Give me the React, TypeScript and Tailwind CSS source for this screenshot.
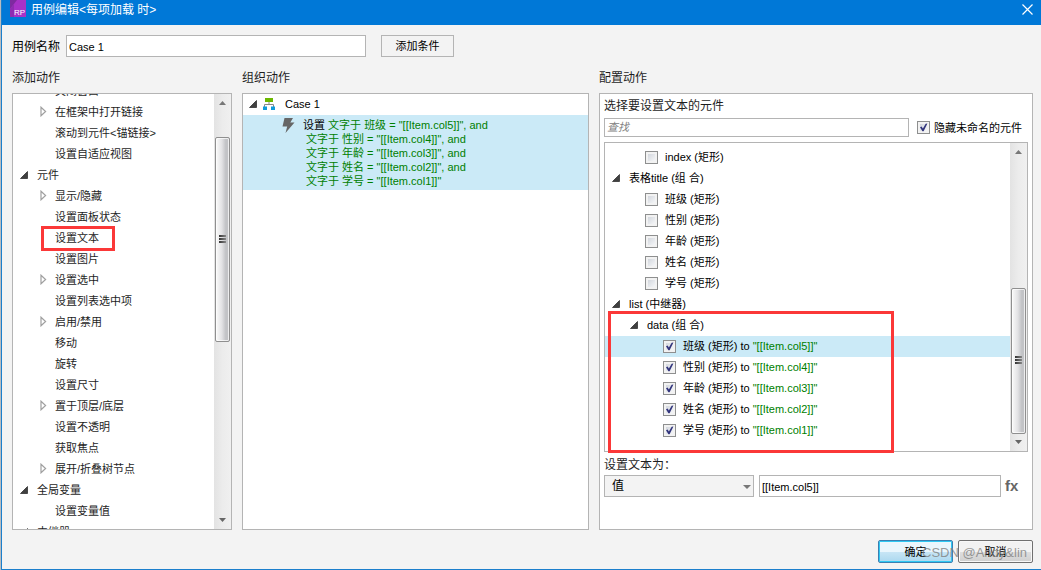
import { useState } from "react";

interface TreeRow {
  label: string;
  level: number;
  icon?: "open" | "closed";
  marked?: boolean;
}

interface Widget {
  label: string;
  level: number;
  kind: "group" | "leaf";
  value?: string;
  active?: boolean;
}

const actions: TreeRow[] = [
  { label: "关闭窗口", level: 1 },
  { label: "在框架中打开链接", level: 1, icon: "closed" },
  { label: "滚动到元件<锚链接>", level: 1 },
  { label: "设置自适应视图", level: 1 },
  { label: "元件", level: 0, icon: "open" },
  { label: "显示/隐藏", level: 1, icon: "closed" },
  { label: "设置面板状态", level: 1 },
  { label: "设置文本", level: 1, marked: true },
  { label: "设置图片", level: 1 },
  { label: "设置选中", level: 1, icon: "closed" },
  { label: "设置列表选中项", level: 1 },
  { label: "启用/禁用", level: 1, icon: "closed" },
  { label: "移动", level: 1 },
  { label: "旋转", level: 1 },
  { label: "设置尺寸", level: 1 },
  { label: "置于顶层/底层", level: 1, icon: "closed" },
  { label: "设置不透明", level: 1 },
  { label: "获取焦点", level: 1 },
  { label: "展开/折叠树节点", level: 1, icon: "closed" },
  { label: "全局变量", level: 0, icon: "open" },
  { label: "设置变量值", level: 1 },
  { label: "中继器", level: 0, icon: "open" },
];

const widgets: Widget[] = [
  { label: "index (矩形)", level: 1, kind: "leaf" },
  { label: "表格title (组 合)", level: 0, kind: "group" },
  { label: "班级 (矩形)", level: 1, kind: "leaf" },
  { label: "性别 (矩形)", level: 1, kind: "leaf" },
  { label: "年龄 (矩形)", level: 1, kind: "leaf" },
  { label: "姓名 (矩形)", level: 1, kind: "leaf" },
  { label: "学号 (矩形)", level: 1, kind: "leaf" },
  { label: "list (中继器)", level: 0, kind: "group" },
  { label: "data (组 合)", level: 1, kind: "group" },
  { label: "班级 (矩形)", level: 2, kind: "leaf", value: "[[Item.col5]]", active: true },
  { label: "性别 (矩形)", level: 2, kind: "leaf", value: "[[Item.col4]]" },
  { label: "年龄 (矩形)", level: 2, kind: "leaf", value: "[[Item.col3]]" },
  { label: "姓名 (矩形)", level: 2, kind: "leaf", value: "[[Item.col2]]" },
  { label: "学号 (矩形)", level: 2, kind: "leaf", value: "[[Item.col1]]" },
];

const settings = [
  { name: "班级", value: "[[Item.col5]]" },
  { name: "性别", value: "[[Item.col4]]" },
  { name: "年龄", value: "[[Item.col3]]" },
  { name: "姓名", value: "[[Item.col2]]" },
  { name: "学号", value: "[[Item.col1]]" },
];

function OpenArrow() {
  return (
    <svg className="h-2 w-2 shrink-0" viewBox="0 0 8 8" aria-hidden="true">
      <path d="M7.5 0.5V7.5H0.5Z" fill="#404040" stroke="#222" strokeWidth="0.7" />
    </svg>
  );
}

function ClosedArrow() {
  return (
    <svg className="h-[11px] w-[7px] shrink-0" viewBox="0 0 7 11" aria-hidden="true">
      <path d="M1 1.2L5.6 5.5L1 9.8Z" fill="#fff" stroke="#a0a0a0" strokeWidth="1.2" />
    </svg>
  );
}

function Checkbox({ id, defaultChecked }: { id: string; defaultChecked?: boolean }) {
  return (
    <span className="relative block h-[13px] w-[13px] shrink-0">
      <input id={id} type="checkbox" defaultChecked={defaultChecked} className="peer block h-[13px] w-[13px] appearance-none border border-[#8e8f8f] bg-linear-to-br from-[#c9ced6] to-white ring-2 ring-inset ring-[#f2f2f2]" />
      <svg className="pointer-events-none absolute inset-0 hidden peer-checked:block" viewBox="0 0 13 13" aria-hidden="true">
        <path d="M3 6.2L4.6 5.6L5.9 7.6L8.7 2.8L10.4 2.6L6.6 10.2H5.4Z" fill="#31347c" />
      </svg>
    </span>
  );
}

function Scrollbar({ thumb }: { thumb: string }) {
  return (
    <div className="flex w-[17px] shrink-0 flex-col items-center bg-linear-to-r from-[#e3e3e3] via-[#ececec] to-[#f0f0f0]">
      <div className="flex h-[17px] items-center">
        <svg className="h-1 w-[7px]" viewBox="0 0 7 4" aria-hidden="true"><path d="M0 4L3.5 0L7 4Z" fill="#777" /></svg>
      </div>
      <div className="flex w-full flex-1 flex-col px-px">
        <div className={`flex flex-col items-center justify-center gap-px rounded-xs border border-[#8f8f8f] bg-linear-to-r from-[#f5f5f5] from-10% via-[#e2e2e4] via-45% to-[#c2c3c6] to-75% pb-0.5 ring-1 ring-inset ring-white/70 ${thumb}`}>
          <span className="h-0.5 w-[7px] bg-linear-to-r from-[#333] to-[#888]"></span>
          <span className="h-0.5 w-[7px] bg-linear-to-r from-[#333] to-[#888]"></span>
          <span className="h-0.5 w-[7px] bg-linear-to-r from-[#333] to-[#888]"></span>
        </div>
      </div>
      <div className="flex h-[17px] items-center pb-0.5">
        <svg className="h-1 w-[7px]" viewBox="0 0 7 4" aria-hidden="true"><path d="M0 0H7L3.5 4Z" fill="#666" /></svg>
      </div>
    </div>
  );
}

function ActionTree() {
  return (
    <div className="flex h-[437px] border border-[#b4b4b4] bg-white text-[#1e1e1e]">
      <div className="min-w-0 flex-1 overflow-hidden">
        <ul className="-mt-[14px]">
          {actions.map((row) => (
            <li key={row.label} className="relative">
              <button className={`flex h-[21px] w-full items-center whitespace-nowrap text-left ${row.level === 0 ? "pl-[7px]" : "pl-[27px]"}`}>
                <span className={`flex shrink-0 ${row.level === 0 ? "w-[17px]" : "w-[15px]"}`}>
                  {row.icon === "open" && <OpenArrow />}
                  {row.icon === "closed" && <ClosedArrow />}
                </span>
                {row.label}
              </button>
              {row.marked && <span className="pointer-events-none absolute -top-px left-7 h-[25px] w-[74px] border-3 border-[#fb3838]"></span>}
            </li>
          ))}
        </ul>
      </div>
      <Scrollbar thumb="mt-[26px] h-[205px]" />
    </div>
  );
}

function CasePanel() {
  return (
    <div className="h-[437px] overflow-hidden border border-[#b4b4b4] bg-white">
      <button className="flex h-[21px] w-full items-center pb-px pl-1.5 text-left">
        <OpenArrow />
        <svg className="ml-1.5 h-3 w-3" viewBox="0 0 12 12" aria-hidden="true">
          <path d="M2 0H10V4H2Z" fill="#6cb800" />
          <path d="M6 4V6.5M1.5 9V6.5H10.5V9" fill="none" stroke="#888" />
          <path d="M0 8.5H4V12H0ZM8 8.5H12V12H8Z" fill="#0f9bdb" />
        </svg>
        <span className="ml-2.5">Case 1</span>
      </button>
      <div className="flex bg-[#cbeaf7] pt-[3px] pb-0.5 pl-[39px]">
        <svg className="h-[15px] w-[13px] shrink-0" viewBox="0 0 13 15" aria-hidden="true">
          <path d="M2.5 0H11L8.3 4.5H12.5L3.5 15L5.2 8.5H0.5Z" fill="#666" />
        </svg>
        <div className="ml-2 leading-[14px] whitespace-nowrap text-[#008000]">
          {settings.map((s, i) => (
            <p key={s.name} className={i === 0 ? "" : "pl-[3px]"}>
              {i === 0 && <span className="text-black">设置 </span>}
              文字于 {s.name} = "{s.value}"{i < settings.length - 1 && ", and"}
            </p>
          ))}
        </div>
      </div>
    </div>
  );
}

function WidgetTree() {
  return (
    <div className="relative mt-[5px] flex h-[310px] border border-[#b4b4b4] bg-white">
      <ul className="min-w-0 flex-1 overflow-hidden pt-1">
        {widgets.map((w, i) => {
          const id = `widget-${i}`;
          if (w.kind === "group") {
            return (
              <li key={id}>
                <button className={`flex h-[21px] w-full items-center gap-[9px] pb-0.5 text-left ${w.level === 0 ? "pl-[7px]" : "pl-[25px]"}`}>
                  <OpenArrow />
                  {w.label}
                </button>
              </li>
            );
          }
          return (
            <li key={id} className={`flex h-[21px] items-center gap-[7px] ${w.level === 1 ? "pl-10" : "pl-[58px]"} ${w.active ? "bg-[#cbeaf7]" : ""}`}>
              <Checkbox id={id} defaultChecked={!!w.value} />
              <label htmlFor={id} className="pb-0.5 whitespace-nowrap">
                {w.label}
                {w.value && <> to <span className="text-[#008000]">"{w.value}"</span></>}
              </label>
            </li>
          );
        })}
      </ul>
      <Scrollbar thumb="mt-[128px] h-[146px]" />
      <div className="pointer-events-none absolute top-[168px] left-[3px] h-[142px] w-[286px] border-3 border-[#fb3838]"></div>
    </div>
  );
}

export default function App() {
  const [name, setName] = useState("Case 1");
  const [value, setValue] = useState("[[Item.col5]]");

  return (
    <div className="flex min-h-screen bg-[#b9bcc0] pl-px font-['Liberation_Sans','Noto_Sans_CJK_SC',sans-serif] text-[11px] leading-[14px] text-black">
      <div className="flex min-w-0 flex-1 flex-col border-b border-l border-[#1b7fcc] bg-[#f3f3f3]">
        <header className="flex h-[25px] items-start bg-[#0078d7] pr-2 pl-2 text-white">
          <svg className="h-[17px] w-4 shrink-0" viewBox="0 0 16 17" aria-hidden="true">
            <path d="M0 0H16V17H0Z" fill="#a832c8" />
            <path d="M0 0H7L0 9Z" fill="#7e2aa0" />
            <path d="M0 9L4 4V17H0Z" fill="#8f2cb2" />
            <text x="4" y="15" fontSize="8" fill="#fff">RP</text>
          </svg>
          <h1 className="ml-[5px] text-xs leading-5">用例编辑&lt;每项加载 时&gt;</h1>
          <button aria-label="关闭" className="mt-1 ml-auto">
            <svg className="h-[11px] w-[11px]" viewBox="0 0 11 11" aria-hidden="true">
              <path d="M0.5 0.5L10.5 10.5M10.5 0.5L0.5 10.5" stroke="#fff" strokeWidth="1.2" />
            </svg>
          </button>
        </header>

        <main className="flex flex-1 flex-col pt-2.5 pr-2 pb-1.5 pl-2.5">
          <div className="flex items-center">
            <label htmlFor="case-name" className="w-[54px] pt-0.5 text-xs">用例名称</label>
            <input id="case-name" value={name} onChange={(e) => setName(e.target.value)} className="h-[22px] w-[300px] border border-[#b4b4b4] bg-white px-0.5 pt-0.5 outline-none" />
            <button className="ml-[15px] h-[22px] w-[73px] border border-[#b4b4b4] bg-[#f3f3f3]">添加条件</button>
          </div>

          <div className="mt-[11px] grid grid-cols-[220fr_347fr_434fr] gap-2.5">
            <section className="min-w-0">
              <h2 className="h-[25px] text-xs leading-5 text-[#1e1e1e]">添加动作</h2>
              <ActionTree />
            </section>
            <section className="min-w-0">
              <h2 className="h-[25px] text-xs leading-5 text-[#1e1e1e]">组织动作</h2>
              <CasePanel />
            </section>
            <section className="min-w-0">
              <h2 className="h-[25px] text-xs leading-5 text-[#1e1e1e]">配置动作</h2>
              <div className="h-[437px] border border-[#b4b4b4] bg-white px-1">
                <h3 className="h-6 text-xs leading-6 text-[#1e1e1e]">选择要设置文本的元件</h3>
                <div className="flex items-center">
                  <input aria-label="查找" placeholder="查找" className="h-[19px] min-w-0 flex-1 border border-[#b4b4b4] bg-white px-0.5 pb-0.5 outline-none placeholder:text-[#808080] placeholder:italic" />
                  <div className="ml-2 flex items-center gap-1 pr-1.5">
                    <Checkbox id="hide-unnamed" defaultChecked />
                    <label htmlFor="hide-unnamed" className="whitespace-nowrap">隐藏未命名的元件</label>
                  </div>
                </div>
                <WidgetTree />
                <label htmlFor="text-value" className="block h-[23px] text-xs leading-[26px] text-[#1e1e1e]">设置文本为：</label>
                <div className="flex items-center">
                  <div className="relative h-[22px] w-[150px]">
                    <select aria-label="值" className="h-full w-full appearance-none border border-[#b4b4b4] bg-[#f3f3f3] pl-[7px] text-xs outline-none">
                      <option>值</option>
                    </select>
                    <svg className="pointer-events-none absolute top-2.5 right-[3px] h-1 w-2" viewBox="0 0 8 4" aria-hidden="true"><path d="M0 0H8L4 4Z" fill="#777" /></svg>
                  </div>
                  <input id="text-value" value={value} onChange={(e) => setValue(e.target.value)} className="ml-[5px] h-[22px] min-w-0 flex-1 border border-[#b4b4b4] bg-white px-0.5 pt-0.5 outline-none" />
                  <button className="w-[27px] pl-1 text-left text-[15px] font-bold text-[#666]">fx</button>
                </div>
              </div>
            </section>
          </div>

          <div className="relative mt-2.5 flex justify-end gap-[5px]">
            <button className="h-[23px] w-[75px] rounded-xs border border-[#3c7fb1] bg-linear-to-b from-[#eaf6fd] from-50% via-[#c9e6f6] via-50% to-[#abd8ef] ring-1 ring-inset ring-[#2fc8f3]">确定</button>
            <button className="h-[23px] w-[75px] rounded-xs border border-[#707070] bg-linear-to-b from-[#f2f2f2] from-50% via-[#dfdfdf] via-50% to-[#cfcfcf] ring-1 ring-inset ring-[#f8f8f8]">取消</button>
            <span className="pointer-events-none absolute top-1.5 right-1.5 text-[13px] text-[#808080]/80">CSDN @Andy&amp;lin</span>
          </div>
        </main>
      </div>
    </div>
  );
}
